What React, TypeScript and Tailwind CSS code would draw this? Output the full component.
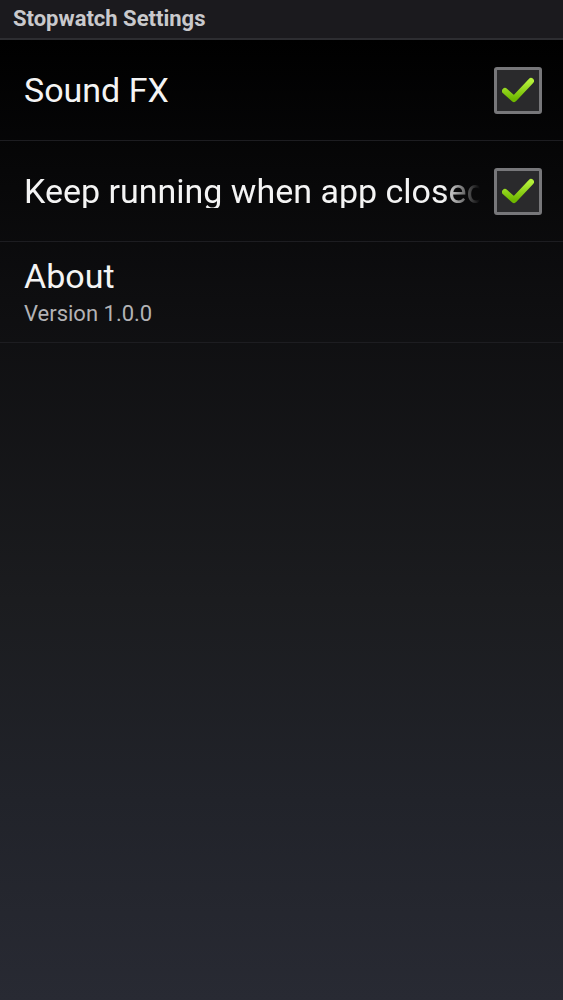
import type { ReactNode } from "react";

function Checkbox({ checked }: { checked: boolean }) {
  return (
    <div className="w-[48px] h-[47px] shrink-0 rounded-[3px] border-[3px] border-[#77777a] bg-[#2a2a2c] flex items-center justify-center">
      {checked && (
        <svg width="32" height="28" viewBox="0 0 32 28">
          <defs>
            <linearGradient id="chk" x1="0" y1="0" x2="0" y2="1">
              <stop offset="0" stopColor="#b4f03a" />
              <stop offset="1" stopColor="#6fb800" />
            </linearGradient>
          </defs>
          <path
            d="M3 15 L12 23 L29 5"
            fill="none"
            stroke="url(#chk)"
            strokeWidth="6"
            strokeLinecap="round"
            strokeLinejoin="round"
          />
        </svg>
      )}
    </div>
  );
}

function Row({ children, right }: { children: ReactNode; right?: ReactNode }) {
  return (
    <div className="h-[101px] shrink-0 flex items-center gap-[14px] pl-[24px] pr-[21px] border-b border-[#1d1d21]">
      <div className="flex-1 min-w-0">{children}</div>
      {right}
    </div>
  );
}

export default function App() {
  return (
    <div
      className="w-full h-[1000px] flex flex-col bg-[linear-gradient(to_bottom,#000000_4%,#0e0e10_30%,#1b1c1f_60%,#21232a_80%,#282a33_100%)]"
      style={{ fontFamily: "Roboto, 'Noto Sans', sans-serif" }}
    >
      <div className="h-[40px] shrink-0 bg-[#1b1a1e] border-b-2 border-[#2d2d31] flex items-center px-[13px]">
        <span className="text-[22px] font-bold text-[#c9c9cc] leading-none">Stopwatch Settings</span>
      </div>

      <Row right={<Checkbox checked />}>
        <div className="text-[34px] text-[#f4f4f4] leading-none">Sound FX</div>
      </Row>

      <Row right={<Checkbox checked />}>
        <div className="text-[34px] text-[#f4f4f4] leading-none whitespace-nowrap overflow-hidden [mask-image:linear-gradient(to_right,black_92%,transparent)]">
          Keep running when app closed
        </div>
      </Row>

      <Row>
        <div className="text-[34px] text-[#f4f4f4] leading-none">About</div>
        <div className="text-[22px] text-[#b3b3b6] leading-none mt-[10px]">Version 1.0.0</div>
      </Row>
    </div>
  );
}
